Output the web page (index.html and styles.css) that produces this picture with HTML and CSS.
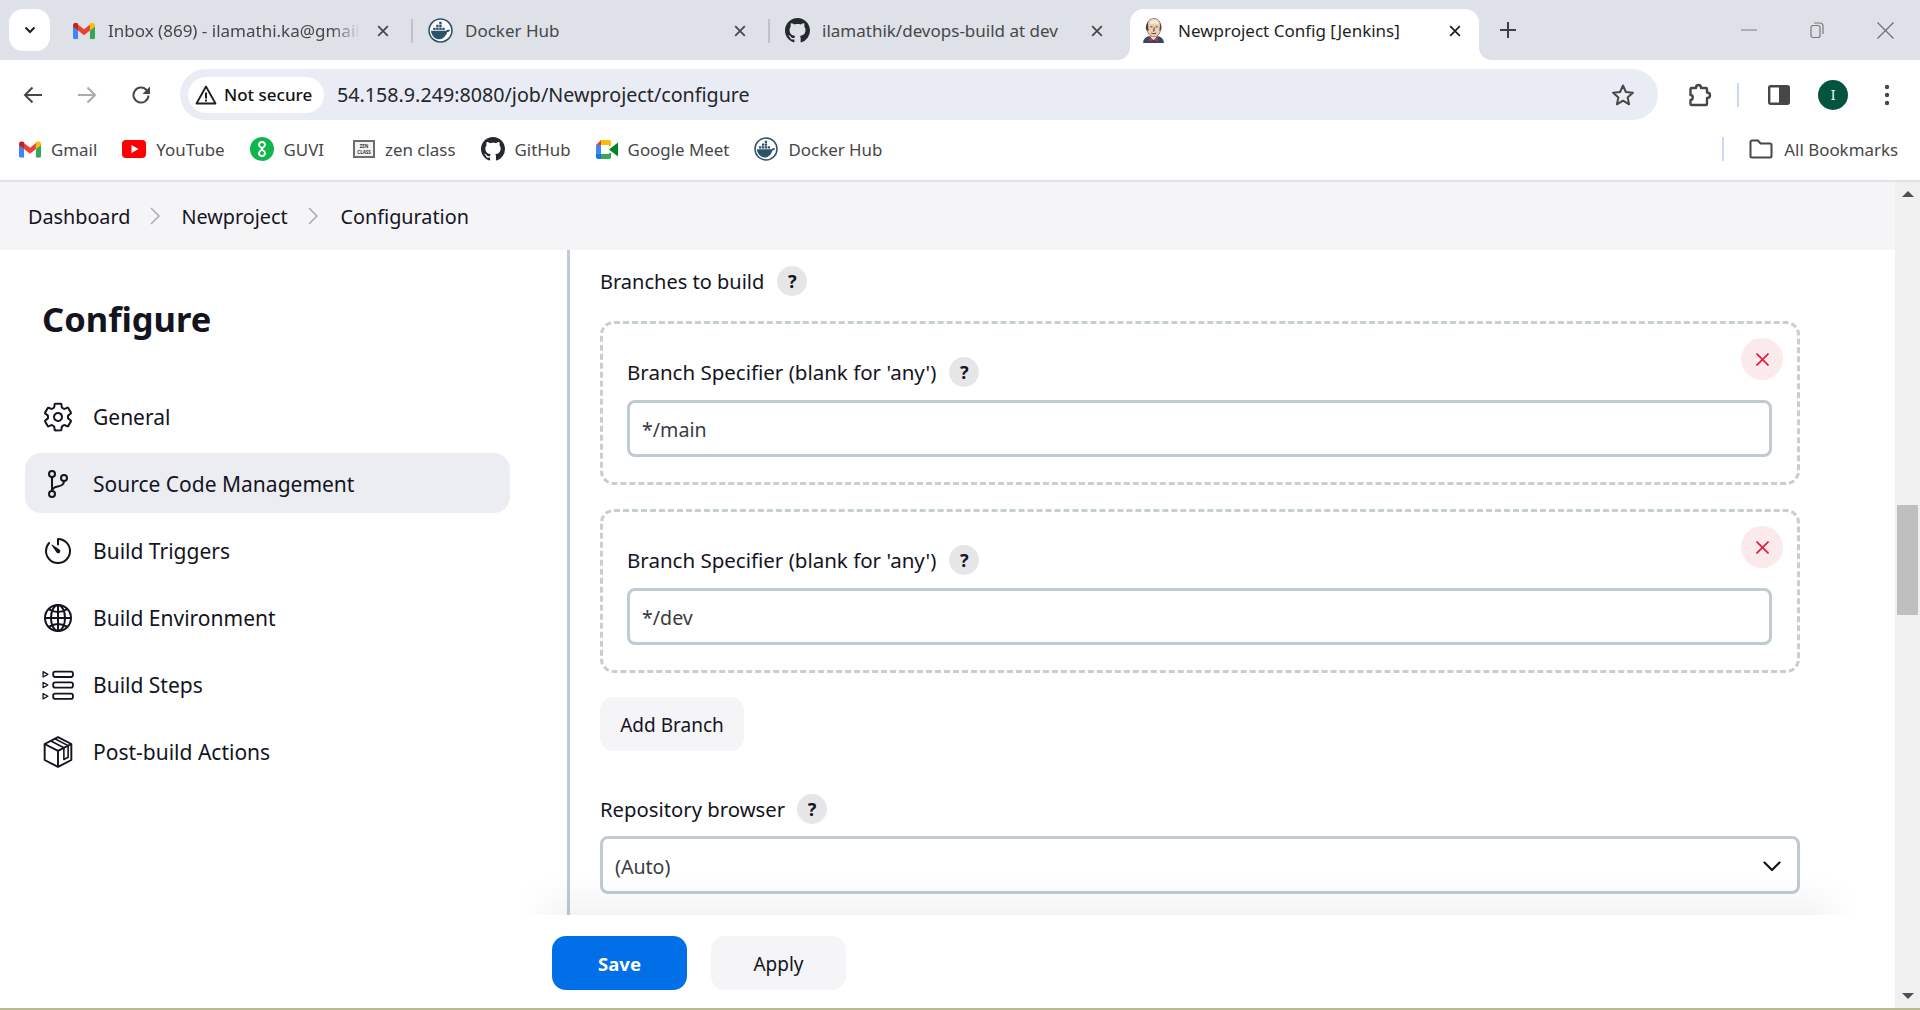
FILE: index.html
```html
<!DOCTYPE html>
<html>
	<head>
		<title>Newproject Config [Jenkins]</title>
		<link rel="stylesheet" href="styles.css">
	</head>
	<body>
		<svg class="icon_defs" width="0" height="0">
			<symbol id="i_gmail" viewBox="0 0 24 18">
				<path fill="#4285f4" d="M0 3v13.4C0 17.3.7 18 1.600 18H5.500V8.500z"/>
				<path fill="#34a853" d="M24 3v13.400c0 .9-.7 1.600-1.600 1.600H18.500V8.500z"/>
				<path fill="#ea4335" d="M5.500 8.500V2L12 7l6.500-5v6.500L12 13.500z"/>
				<path fill="#c5221f" d="M0 3c0-2.500 2.800-3.800 4.700-2.400L5.500 1.200v7.300L0 4.300z"/>
				<path fill="#fbbc04" d="M24 3c0-2.500-2.800-3.800-4.700-2.400l-.8.6v7.300L24 4.300z"/>
			</symbol>
			<symbol id="i_docker" viewBox="0 0 24 24">
				<circle cx="12" cy="12" r="11" fill="#fff" stroke="#2c5268" stroke-width="1.500"/>
				<path fill="#2c5268" d="M2.800 12.200h14.700c.6-1.100 2.200-1.300 3.700-.7-.5 1.300-1.500 1.900-2.700 2-1.100 3.700-3.900 6.500-7 6.900-4.500.4-8-3.200-8.700-8.200z"/>
				<path fill="#2c5268" d="M5 9.300h2.300v2.300H5zM7.900 9.300h2.300v2.300H7.900zM10.800 9.300h2.300v2.300h-2.300zM7.900 6.500h2.300v2.300H7.900zM10.800 6.500h2.300v2.300h-2.300zM10.800 3.700h2.300V6h-2.300zM13.700 9.300H16v2.300h-2.300z"/>
			</symbol>
			<symbol id="i_github" viewBox="0 0 16 16">
				<path fill="#24292e" d="M8 0C3.580 0 0 3.580 0 8c0 3.540 2.290 6.530 5.470 7.590.4.070.55-.17.55-.38 0-.19-.01-.82-.01-1.490-2.010.37-2.530-.49-2.690-.94-.09-.23-.48-.94-.82-1.130-.28-.15-.68-.52-.01-.53.63-.01 1.080.58 1.230.82.72 1.210 1.870.87 2.330.66.07-.52.28-.87.51-1.070-1.780-.2-3.640-.89-3.640-3.950 0-.87.31-1.590.82-2.150-.08-.2-.36-1.020.08-2.120 0 0 .67-.21 2.200.82.64-.18 1.320-.27 2-.27.68 0 1.360.09 2 .27 1.530-1.040 2.200-.82 2.200-.82.44 1.100.16 1.920.08 2.120.51.56.82 1.270.82 2.150 0 3.070-1.870 3.750-3.650 3.950.29.25.54.73.54 1.480 0 1.070-.01 1.930-.01 2.200 0 .21.15.46.55.38A8.013 8.013 0 0016 8c0-4.420-3.580-8-8-8z"/>
			</symbol>
			<symbol id="i_close" viewBox="0 0 16 16">
				<path fill="none" stroke="currentColor" stroke-width="2" d="M2.500 2.500l11 11M13.500 2.500l-11 11"/>
			</symbol>
		</svg>

		<div id="tab_strip">
			<button class="tab_search">
				<svg width="14" height="14" viewBox="0 0 14 14"><path fill="none" stroke="#1f1f1f" stroke-width="2" d="M2.500 4.500L7 9l4.500-4.500"/></svg>
			</button>
			<div class="tab">
				<svg class="tab_icon" viewBox="0 0 24 18"><use href="#i_gmail"/></svg>
				<span class="tab_title tab_title_cut">Inbox (869) - ilamathi.ka@gmail</span>
				<svg class="tab_close" viewBox="0 0 16 16"><use href="#i_close"/></svg>
			</div>
			<div class="tab_sep"></div>
			<div class="tab">
				<svg class="tab_icon tab_icon_big" viewBox="0 0 24 24"><use href="#i_docker"/></svg>
				<span class="tab_title">Docker Hub</span>
				<svg class="tab_close" viewBox="0 0 16 16"><use href="#i_close"/></svg>
			</div>
			<div class="tab_sep"></div>
			<div class="tab">
				<svg class="tab_icon tab_icon_big" viewBox="0 0 16 16"><use href="#i_github"/></svg>
				<span class="tab_title">ilamathik/devops-build at dev</span>
				<svg class="tab_close" viewBox="0 0 16 16"><use href="#i_close"/></svg>
			</div>
			<div class="tab tab_active">
				<svg class="tab_icon tab_icon_big" viewBox="0 0 24 24">
					<path fill="#2f4a66" d="M2 24c0-3.500 2-5.500 5-6.500h10c3 1 5 3 5 6.500z"/>
					<path fill="#f4f1ec" d="M9 17h6l-1.500 4h-3z"/>
					<path fill="#f0cdb0" stroke="#6f6259" stroke-width=".7" d="M5.500 9C5.500 3.500 8.500.5 12.500.5S19 3.500 19 9c0 5-2.500 9-6.500 9s-7-4-7-9z"/>
					<path fill="#f6ead8" d="M8 6c.5-3 2.500-4.500 4.500-4.500S16.500 3 17 6c-3-1-6-1-9 0z"/>
					<path fill="#4a4642" d="M5.500 12c-1.500-2-1-6 1.500-8.500C6.800 6 6.800 9 7.500 12zM19 12c1-2 .8-5-.8-7.500 0 2.500 0 5-.7 7.500z"/>
					<path fill="none" stroke="#3b2e2a" stroke-width=".9" d="M9 8.500h2M14 8.500h2M12.500 9v3.500h-1M10 14.500c1.500.8 3 .8 4.500 0"/>
					<path fill="#d33833" d="M12 20.500l-4-2.200v4.400zM12 20.500l4-2.200v4.400z"/>
				</svg>
				<span class="tab_title">Newproject Config [Jenkins]</span>
				<svg class="tab_close" viewBox="0 0 16 16"><use href="#i_close"/></svg>
			</div>
			<button class="tab_new">
				<svg width="16" height="16" viewBox="0 0 16 16"><path fill="none" stroke="#3c3f43" stroke-width="2" d="M8 0v16M0 8h16"/></svg>
			</button>
			<div class="win_buttons">
				<div class="win_button"><svg width="16" height="16" viewBox="0 0 16 16"><path stroke="#8a8c90" stroke-width="1.200" d="M0 8h16"/></svg></div>
				<div class="win_button"><svg width="16" height="18" viewBox="0 0 16 18"><path fill="none" stroke="#77797d" stroke-width="1.200" d="M2 6.500a2 2 0 012-2h5a2 2 0 012 2v8a2 2 0 01-2 2H4a2 2 0 01-2-2zM5 2h6a3 3 0 013 3v8"/></svg></div>
				<div class="win_button"><svg width="17" height="17" viewBox="0 0 17 17"><path fill="none" stroke="#6d6f73" stroke-width="1.200" d="M.5.5l16 16M16.500.5l-16 16"/></svg></div>
			</div>
		</div>

		<div id="tool_bar">
			<div class="tool_button">
				<svg width="20" height="20" viewBox="0 0 20 20"><path fill="none" stroke="#474747" stroke-width="2" d="M19 10H2M9.500 2.500L2 10l7.500 7.500"/></svg>
			</div>
			<div class="tool_button">
				<svg width="20" height="20" viewBox="0 0 20 20"><path fill="none" stroke="#a9abae" stroke-width="2" d="M1 10h17M10.500 2.500L18 10l-7.500 7.500"/></svg>
			</div>
			<div class="tool_button">
				<svg width="20" height="20" viewBox="0 0 20 20"><path fill="none" stroke="#474747" stroke-width="2" d="M17.500 10.500a7.500 7.500 0 11-2.200-5.800L18 7.500"/><path fill="#474747" d="M19 1.500V9h-7.500z"/></svg>
			</div>
			<div class="omnibox">
				<div class="secure_chip">
					<svg width="22" height="20" viewBox="0 0 22 20"><path fill="none" stroke="#1f1f1f" stroke-width="1.800" stroke-linejoin="round" d="M11 1.500L20.500 18.500h-19z"/><path stroke="#1f1f1f" stroke-width="2" d="M11 7.500v6M11 14.500v2"/></svg>
					<span>Not secure</span>
				</div>
				<span class="omni_url">54.158.9.249:8080/job/Newproject/configure</span>
				<svg class="omni_star" width="24" height="24" viewBox="0 0 24 24"><path fill="none" stroke="#474747" stroke-width="2" stroke-linejoin="round" d="M12 2.500l2.900 6.500 7 .7-5.300 4.700 1.500 6.900-6.100-3.600-6.100 3.600 1.500-6.900-5.300-4.700 7-.7z"/></svg>
			</div>
			<div class="tool_button tool_ext">
				<svg width="26" height="26" viewBox="0 0 26 26"><path fill="none" stroke="#474747" stroke-width="2.400" stroke-linejoin="round" d="M4 6h5c0-4 5-4 5 0h5a1 1 0 011 1v3.500c4 0 4 5.500 0 5.500v6a1 1 0 01-1 1H4.500a1 1 0 01-1-1V18c3 0 3-5 0-5V7z"/></svg>
			</div>
			<div class="tool_sep"></div>
			<div class="tool_button tool_panel">
				<svg width="22" height="22" viewBox="0 0 22 22"><rect x="1.200" y="2.200" width="19.600" height="17.600" rx="1.500" fill="none" stroke="#474747" stroke-width="2.400"/><rect x="11" y="2" width="10" height="18" fill="#474747"/></svg>
			</div>
			<div class="tool_button"><div class="avatar">I</div></div>
			<div class="tool_button">
				<svg width="6" height="22" viewBox="0 0 6 22"><circle cx="3" cy="3" r="2.200" fill="#474747"/><circle cx="3" cy="11" r="2.200" fill="#474747"/><circle cx="3" cy="19" r="2.200" fill="#474747"/></svg>
			</div>
		</div>

		<div id="bookmark_bar">
			<div class="bookmark">
				<svg class="mark_icon" width="22" height="17" viewBox="0 0 24 18"><use href="#i_gmail"/></svg>
				<span>Gmail</span>
			</div>
			<div class="bookmark">
				<svg class="mark_icon" width="24" height="18" viewBox="0 0 24 18"><rect width="24" height="18" rx="4" fill="#f00"/><path fill="#fff" d="M9.500 5l7 4-7 4z"/></svg>
				<span>YouTube</span>
			</div>
			<div class="bookmark">
				<svg class="mark_icon" width="24" height="24" viewBox="0 0 24 24"><ellipse cx="12" cy="12" rx="12" ry="12" fill="#0fb64c"/><path fill="none" stroke="#fff" stroke-width="1.800" d="M9 8a3 3 0 116 0c0 2-3 2.500-3 4s3 1.500 3 4a3 3 0 11-6 0c0-2 3-2.500 3-4s-3-2-3-4z"/></svg>
				<span>GUVI</span>
			</div>
			<div class="bookmark bookmark_zen">
				<div class="zen_icon"><span>ZEN</span><span>CLASS</span></div>
				<span>zen class</span>
			</div>
			<div class="bookmark">
				<svg class="mark_icon" width="24" height="24" viewBox="0 0 16 16"><use href="#i_github"/></svg>
				<span>GitHub</span>
			</div>
			<div class="bookmark">
				<svg class="mark_icon" width="22" height="19" viewBox="0 0 22 19">
					<path fill="#ea4335" d="M5 0v5H0z"/>
					<path fill="#fbbc04" d="M5 0h8a2 2 0 012 2v4h-2V5H5z"/>
					<path fill="#4285f4" d="M0 5h5v9H0z"/>
					<path fill="#1a73e8" d="M0 14h5v5H2a2 2 0 01-2-2z"/>
					<path fill="#34a853" d="M5 14h8v-1h2v4a2 2 0 01-2 2H5z"/>
					<path fill="#00832d" d="M13 9.500l9-7v14z"/>
				</svg>
				<span>Google Meet</span>
			</div>
			<div class="bookmark">
				<svg class="mark_icon" width="24" height="24" viewBox="0 0 24 24"><use href="#i_docker"/></svg>
				<span>Docker Hub</span>
			</div>
			<div class="bookmark_all">
				<div class="mark_sep"></div>
				<svg class="mark_icon" width="24" height="20" viewBox="0 0 24 20"><path fill="none" stroke="#474747" stroke-width="2" d="M1.500 3a1.500 1.500 0 011.500-1.500h6l2.500 3H21A1.500 1.500 0 0122.500 6v11a1.500 1.500 0 01-1.500 1.500H3A1.500 1.500 0 011.500 17z"/></svg>
				<span>All Bookmarks</span>
			</div>
		</div>

		<div id="page">
			<div id="page_main">
				<div id="bread_crumb">
					<span>Dashboard</span>
					<svg class="crumb_arrow" width="10" height="18" viewBox="0 0 10 18"><path fill="none" stroke="#a9aab4" stroke-width="1.500" d="M1 1l8 8-8 8"/></svg>
					<span>Newproject</span>
					<svg class="crumb_arrow" width="10" height="18" viewBox="0 0 10 18"><path fill="none" stroke="#a9aab4" stroke-width="1.500" d="M1 1l8 8-8 8"/></svg>
					<span class="crumb_last">Configuration</span>
				</div>

				<div id="config_body">
					<div id="side_panel">
						<h1 class="side_title">Configure</h1>
						<div class="side_item">
							<svg class="side_icon" viewBox="0 0 512 512"><path fill="none" stroke="#14141f" stroke-width="32" stroke-linecap="round" stroke-linejoin="round" d="M262.290 192.310a64 64 0 1057.400 57.400 64.130 64.130 0 00-57.400-57.400zM416.390 256a154.340 154.340 0 01-1.530 20.790l45.210 35.460a10.810 10.810 0 012.450 13.750l-42.770 74a10.810 10.810 0 01-13.140 4.590l-44.900-18.080a16.110 16.110 0 00-15.170 1.750A164.480 164.480 0 01325 400.800a15.940 15.940 0 00-8.820 12.140l-6.730 47.890a11.080 11.080 0 01-10.680 9.170h-85.540a11.110 11.110 0 01-10.690-8.870l-6.720-47.820a16.070 16.070 0 00-9-12.220 155.300 155.300 0 01-21.460-12.570 16 16 0 00-15.110-1.710l-44.890 18.070a10.810 10.810 0 01-13.140-4.580l-42.770-74a10.800 10.800 0 012.450-13.750l38.210-30a16.050 16.050 0 006-14.080c-.36-4.170-.58-8.330-.58-12.500s.21-8.270.58-12.350a16 16 0 00-6.070-13.940l-38.190-30A10.810 10.810 0 0149.480 186l42.770-74a10.810 10.810 0 0113.140-4.590l44.900 18.080a16.110 16.110 0 0015.170-1.750A164.480 164.480 0 01187 111.200a15.940 15.940 0 008.820-12.140l6.730-47.890A11.080 11.080 0 01213.230 42h85.540a11.110 11.110 0 0110.690 8.870l6.720 47.820a16.070 16.070 0 009 12.220 155.300 155.300 0 0121.460 12.570 16 16 0 0015.110 1.710l44.890-18.070a10.810 10.810 0 0113.140 4.580l42.770 74a10.800 10.800 0 01-2.450 13.750l-38.210 30a16.050 16.050 0 00-6.050 14.080c.33 4.140.55 8.300.55 12.470z"/></svg>
							<span>General</span>
						</div>
						<div class="side_item side_item_active">
							<svg class="side_icon" viewBox="0 0 512 512"><g fill="none" stroke="#14141f" stroke-width="32" stroke-linecap="round" stroke-linejoin="round"><circle cx="160" cy="96" r="48"/><circle cx="160" cy="416" r="48"/><path d="M160 368V144"/><circle cx="352" cy="160" r="48"/><path d="M352 208c0 128-192 48-192 160"/></g></svg>
							<span>Source Code Management</span>
						</div>
						<div class="side_item">
							<svg class="side_icon" viewBox="0 0 512 512"><path fill="none" stroke="#14141f" stroke-width="32" stroke-linecap="round" stroke-linejoin="round" d="M112.910 128A191.850 191.850 0 0064 254c-1.180 106.350 85.650 193.800 192 194 106.200.2 192-85.830 192-192 0-104.540-83.550-189.610-187.500-192a4.360 4.360 0 00-4.500 4.370V152"/><path fill="#14141f" d="M233.380 278.630l-79-113a8.130 8.130 0 0111.320-11.320l113 79a32.500 32.500 0 01-37.250 53.260 33.210 33.210 0 01-8.070-7.940z"/></svg>
							<span>Build Triggers</span>
						</div>
						<div class="side_item">
							<svg class="side_icon" viewBox="0 0 512 512"><g fill="none" stroke="#14141f" stroke-width="32"><path stroke-miterlimit="10" d="M256 48C141.130 48 48 141.130 48 256s93.130 208 208 208 208-93.130 208-208S370.870 48 256 48z"/><path stroke-miterlimit="10" d="M256 48c-58.070 0-112.670 93.130-112.670 208S197.930 464 256 464s112.670-93.130 112.670-208S314.070 48 256 48z"/><path stroke-linecap="round" stroke-linejoin="round" d="M117.330 117.330c38.240 27.150 86.380 43.340 138.670 43.340s100.430-16.190 138.670-43.340M394.670 394.670c-38.240-27.150-86.380-43.340-138.670-43.340s-100.430 16.190-138.670 43.340"/><path stroke-miterlimit="10" d="M256 48v416M464 256H48"/></g></svg>
							<span>Build Environment</span>
						</div>
						<div class="side_item">
							<svg class="side_icon" viewBox="0 0 30 30"><g fill="none" stroke="#14141f" stroke-width="1.700"><rect x="10.500" y="2.500" width="18.500" height="5" rx="1.800"/><rect x="10.500" y="12.500" width="18.500" height="5" rx="1.800"/><rect x="10.500" y="23" width="18.500" height="5" rx="1.800"/><path stroke-width="1.200" stroke-linejoin="round" d="M1 2.500l4.500 2.500L1 7.500zM1 12.500l4.500 2.500L1 17.500zM1 23l4.500 2.500L1 28z"/></g></svg>
							<span>Build Steps</span>
						</div>
						<div class="side_item">
							<svg class="side_icon" viewBox="0 0 30 30"><g fill="none" stroke="#14141f" stroke-width="1.800" stroke-linejoin="round"><path d="M15 1l12.500 6.500v15L15 29 2.500 22.500v-15z"/><path d="M2.500 7.500L15 14l12.500-6.500M15 14v15"/><path stroke-width="1.500" d="M8 4.500l12.500 6.500v5M12 2.500L24.500 9v11l-4 2v-6"/></g></svg>
							<span>Post-build Actions</span>
						</div>
					</div>

					<div id="config_form">
						<div class="form_label">
							<span>Branches to build</span>
							<div class="help_mark">?</div>
						</div>
						<div class="repeat_box">
							<button class="remove_button">
								<svg width="13" height="13" viewBox="0 0 13 13"><path fill="none" stroke="#e6193c" stroke-width="1.600" d="M.5.5l12 12M12.500.5l-12 12"/></svg>
							</button>
							<div class="form_label">
								<span>Branch Specifier (blank for 'any')</span>
								<div class="help_mark">?</div>
							</div>
							<div class="text_field">*/main</div>
						</div>
						<div class="repeat_box">
							<button class="remove_button">
								<svg width="13" height="13" viewBox="0 0 13 13"><path fill="none" stroke="#e6193c" stroke-width="1.600" d="M.5.5l12 12M12.500.5l-12 12"/></svg>
							</button>
							<div class="form_label">
								<span>Branch Specifier (blank for 'any')</span>
								<div class="help_mark">?</div>
							</div>
							<div class="text_field">*/dev</div>
						</div>
						<button class="plain_button add_branch">Add Branch</button>
						<div class="form_label repo_label">
							<span>Repository browser</span>
							<div class="help_mark">?</div>
						</div>
						<div class="text_field select_field">
							<span>(Auto)</span>
							<svg width="18" height="11" viewBox="0 0 18 11"><path fill="none" stroke="#14141f" stroke-width="2.200" stroke-linecap="round" stroke-linejoin="round" d="M1.500 1.500L9 9l7.500-7.500"/></svg>
						</div>
					</div>
				</div>

				<div id="bottom_bar">
					<div class="bar_shadow"></div>
					<button class="save_button">Save</button>
					<button class="plain_button apply_button">Apply</button>
				</div>
			</div>

			<div id="scroll_bar">
				<div class="scroll_up"></div>
				<div class="scroll_thumb"></div>
				<div class="scroll_down"></div>
			</div>
		</div>
		<div id="screen_edge"></div>
	</body>
</html>
```

FILE: styles.css
```css
*
{
	box-sizing: border-box;
}
html, body
{
	height: 100%;
}
body
{
	margin: 0;
	height: 1010px;
	overflow: hidden;
	background: #fff;
	color: #1f1f2b;
	font-family: "Noto Sans", "Open Sans", sans-serif;
	display: flex;
	flex-direction: column;
}
button
{
	font-family: inherit;
	border: none;
}
.icon_defs
{
	display: none;
}
/*=============================*/
#tab_strip
{
	height: 60px;
	flex: none;
	background: #dee1e7;
	padding: 9px 0 0 9px;
	display: flex;
	align-items: flex-start;
}
.tab_search
{
	width: 41px;
	height: 42px;
	margin-right: 6px;
	border-radius: 14px;
	background: #fff;
	display: flex;
	align-items: center;
	justify-content: center;
}
.tab
{
	width: 355px;
	height: 51px;
	flex: none;
	padding: 0 18px 8px 15px;
	display: flex;
	align-items: center;
	font-size: 17px;
	color: #45474a;
}
.tab_icon
{
	width: 22px;
	height: 18px;
	margin: 0 13px 0 2px;
	flex: none;
}
.tab_icon_big
{
	width: 25px;
	height: 25px;
	margin: 0 12px 0 0;
}
.tab_title
{
	flex: 1;
	white-space: nowrap;
}
.tab_title_cut
{
	-webkit-mask-image: linear-gradient(to right, #000 86%, transparent 97%);
	mask-image: linear-gradient(to right, #000 86%, transparent 97%);
}
.tab_close
{
	width: 14px;
	height: 14px;
	margin: 0 3px 0 8px;
	flex: none;
	color: #45474a;
}
.tab_sep
{
	width: 2px;
	height: 24px;
	margin-top: 10px;
	flex: none;
	background: #bfc2c6;
}
.tab_active
{
	position: relative;
	width: 349px;
	margin-left: 5px;
	padding: 0 14px 8px 11px;
	background: #fff;
	color: #1f1f1f;
	border-radius: 14px 14px 0 0;
}
.tab_active .tab_close
{
	color: #1f1f1f;
}
.tab_active .tab_icon_big
{
	margin-right: 12px;
}
.tab_active::before, .tab_active::after
{
	content: "";
	position: absolute;
	bottom: 0;
	width: 12px;
	height: 12px;
}
.tab_active::before
{
	left: -12px;
	background: radial-gradient(circle at 0 0, #dee1e7 11.500px, #fff 12px);
}
.tab_active::after
{
	right: -12px;
	background: radial-gradient(circle at 100% 0, #dee1e7 11.500px, #fff 12px);
}
.tab_new
{
	width: 36px;
	height: 42px;
	margin-left: 11px;
	background: none;
	display: flex;
	align-items: center;
	justify-content: center;
}
.win_buttons
{
	margin-left: auto;
	margin-right: 1px;
	display: flex;
}
.win_button
{
	width: 68px;
	height: 42px;
	display: flex;
	align-items: center;
	justify-content: center;
}
/*=============================*/
#tool_bar
{
	height: 60px;
	flex: none;
	padding: 9px 0 0 6px;
	background: #fff;
	border-radius: 12px 12px 0 0;
	display: flex;
	align-items: center;
}
.tool_button
{
	width: 54px;
	height: 42px;
	flex: none;
	display: flex;
	align-items: center;
	justify-content: center;
}
.omnibox
{
	width: 1478px;
	height: 51px;
	margin-left: 12px;
	padding: 0 23px 0 8px;
	border-radius: 26px;
	background: #e9ecf4;
	display: flex;
	align-items: center;
	font-size: 19.700px;
	color: #1f1f1f;
}
.secure_chip
{
	width: 136px;
	height: 36px;
	padding-left: 7px;
	border-radius: 18px;
	background: #fff;
	display: flex;
	align-items: center;
	gap: 7px;
	font-size: 17px;
	font-weight: 500;
	color: #111;
	white-space: nowrap;
}
.omni_url
{
	margin-left: 13px;
	color: #24262a;
}
.omni_star
{
	margin-left: auto;
}
.tool_ext
{
	margin-left: 15px;
}
.tool_sep
{
	width: 2px;
	height: 24px;
	margin-left: 10px;
	background: #c7dbf7;
}
.tool_panel
{
	margin-left: 13px;
}
.avatar
{
	width: 30px;
	height: 30px;
	border-radius: 50%;
	background: #03543f;
	color: #fff;
	font-size: 14px;
	display: flex;
	align-items: center;
	justify-content: center;
}
/*=============================*/
#bookmark_bar
{
	height: 62px;
	flex: none;
	padding: 0 22px 2px 19px;
	background: #fff;
	border-bottom: 2px solid #e2e2e4;
	display: flex;
	align-items: center;
	gap: 25px;
	font-size: 16.900px;
	color: #474747;
}
.bookmark, .bookmark_all
{
	display: flex;
	align-items: center;
	gap: 10px;
	white-space: nowrap;
}
.mark_icon
{
	flex: none;
}
.bookmark_zen
{
	margin-left: 4px;
}
.zen_icon
{
	width: 22px;
	height: 18px;
	border: 2px solid #6d6d6d;
	background: #f3f3f3;
	color: #333;
	font-size: 4.500px;
	font-weight: 700;
	line-height: 6px;
	display: flex;
	flex-direction: column;
	align-items: center;
	justify-content: center;
}
.bookmark_all
{
	margin-left: auto;
	gap: 11px;
}
.mark_sep
{
	width: 2px;
	height: 24px;
	margin-right: 14px;
	background: #c7dbf7;
}
/*=============================*/
#page
{
	flex: 1;
	min-height: 0;
	display: flex;
}
#page_main
{
	flex: 1;
	min-width: 0;
	display: flex;
	flex-direction: column;
}
#bread_crumb
{
	height: 68px;
	flex: none;
	padding-left: 28px;
	background: #f5f5f8;
	display: flex;
	align-items: center;
	font-size: 19.800px;
	color: #14141f;
}
.crumb_arrow
{
	margin: 0 21px 0 20px;
}
.crumb_last
{
	margin-left: 2px;
}
#config_body
{
	flex: 1;
	min-height: 0;
	display: flex;
	overflow: hidden;
}
/*=============================*/
#side_panel
{
	width: 570px;
	flex: none;
	padding: 45px 57px 0 25px;
	border-right: 3px solid #c0cbd1;
	display: flex;
	flex-direction: column;
	gap: 7px;
}
.side_title
{
	height: 48px;
	margin: 0 0 36px 17px;
	font-size: 34.500px;
	line-height: 48px;
	font-weight: 700;
	color: #14141f;
}
.side_item
{
	height: 60px;
	flex: none;
	padding: 2px 0 0 17px;
	border-radius: 16px;
	display: flex;
	align-items: center;
	gap: 19px;
	font-size: 21px;
	color: #14141f;
}
.side_item_active
{
	background: #ecedf2;
}
.side_icon
{
	width: 32px;
	height: 32px;
	flex: none;
}
/*=============================*/
#config_form
{
	flex: 1;
	min-width: 0;
	padding: 16px 95px 0 30px;
}
.form_label
{
	height: 30px;
	display: flex;
	align-items: center;
	gap: 13px;
	font-size: 20px;
	color: #14141f;
	white-space: nowrap;
}
.help_mark
{
	width: 30px;
	height: 30px;
	border-radius: 50%;
	background: #e6e6e8;
	display: flex;
	align-items: center;
	justify-content: center;
	font-size: 18px;
	font-weight: 700;
}
.repeat_box
{
	position: relative;
	height: 164px;
	margin-top: 25px;
	padding: 33px 25px 0 24px;
	border: 3px dashed #c6cfd4;
	border-radius: 14px;
}
.repeat_box + .repeat_box
{
	margin-top: 24px;
}
.repeat_box .form_label
{
	font-size: 20.500px;
}
.remove_button
{
	position: absolute;
	top: 14px;
	right: 14px;
	width: 42px;
	height: 42px;
	padding: 0;
	border-radius: 50%;
	background: #fbeaeb;
	display: flex;
	align-items: center;
	justify-content: center;
}
.text_field
{
	height: 57px;
	margin-top: 13px;
	padding: 2px 0 0 12px;
	border: 3px solid #c0cbd1;
	border-radius: 8px;
	display: flex;
	align-items: center;
	font-size: 19.600px;
	color: #3a3a44;
}
.plain_button
{
	height: 54px;
	padding-top: 2px;
	border-radius: 14px;
	background: #f5f5f8;
	color: #14141f;
	font-size: 19px;
}
.add_branch
{
	display: block;
	width: 144px;
	margin-top: 24px;
}
.repo_label
{
	margin-top: 43px;
	gap: 12px;
	font-size: 20.300px;
}
.select_field
{
	height: 58px;
	margin-top: 12px;
	padding-right: 16px;
	justify-content: space-between;
}
/*=============================*/
#bottom_bar
{
	position: relative;
	height: 93px;
	flex: none;
	padding: 21px 0 0 552px;
	background: #fff;
	display: flex;
	align-items: flex-start;
	gap: 24px;
}
.bar_shadow
{
	position: absolute;
	top: -40px;
	left: 520px;
	right: 40px;
	height: 40px;
	background: linear-gradient(to bottom, rgba(0,0,0,0), rgba(0,0,0,0.045));
	-webkit-mask-image: linear-gradient(to right, transparent, #000 50px, #000 calc(100% - 50px), transparent);
	mask-image: linear-gradient(to right, transparent, #000 50px, #000 calc(100% - 50px), transparent);
}
.save_button
{
	width: 135px;
	height: 54px;
	border-radius: 14px;
	background: #0170e8;
	color: #fff;
	font-size: 18.500px;
	font-weight: 700;
}
.apply_button
{
	width: 135px;
}
/*=============================*/
#scroll_bar
{
	width: 25px;
	flex: none;
	padding: 9px 2px;
	background: #f0f0f0;
	display: flex;
	flex-direction: column;
	align-items: center;
}
.scroll_up
{
	width: 0;
	height: 0;
	border-left: 6px solid transparent;
	border-right: 6px solid transparent;
	border-bottom: 6px solid #505050;
}
.scroll_thumb
{
	width: 21px;
	height: 110px;
	margin-top: 308px;
	background: #bfbfbf;
}
.scroll_down
{
	width: 0;
	height: 0;
	margin-top: auto;
	border-left: 6px solid transparent;
	border-right: 6px solid transparent;
	border-top: 6px solid #505050;
}
#screen_edge
{
	height: 2px;
	flex: none;
	background: #b9b98f;
}
```
